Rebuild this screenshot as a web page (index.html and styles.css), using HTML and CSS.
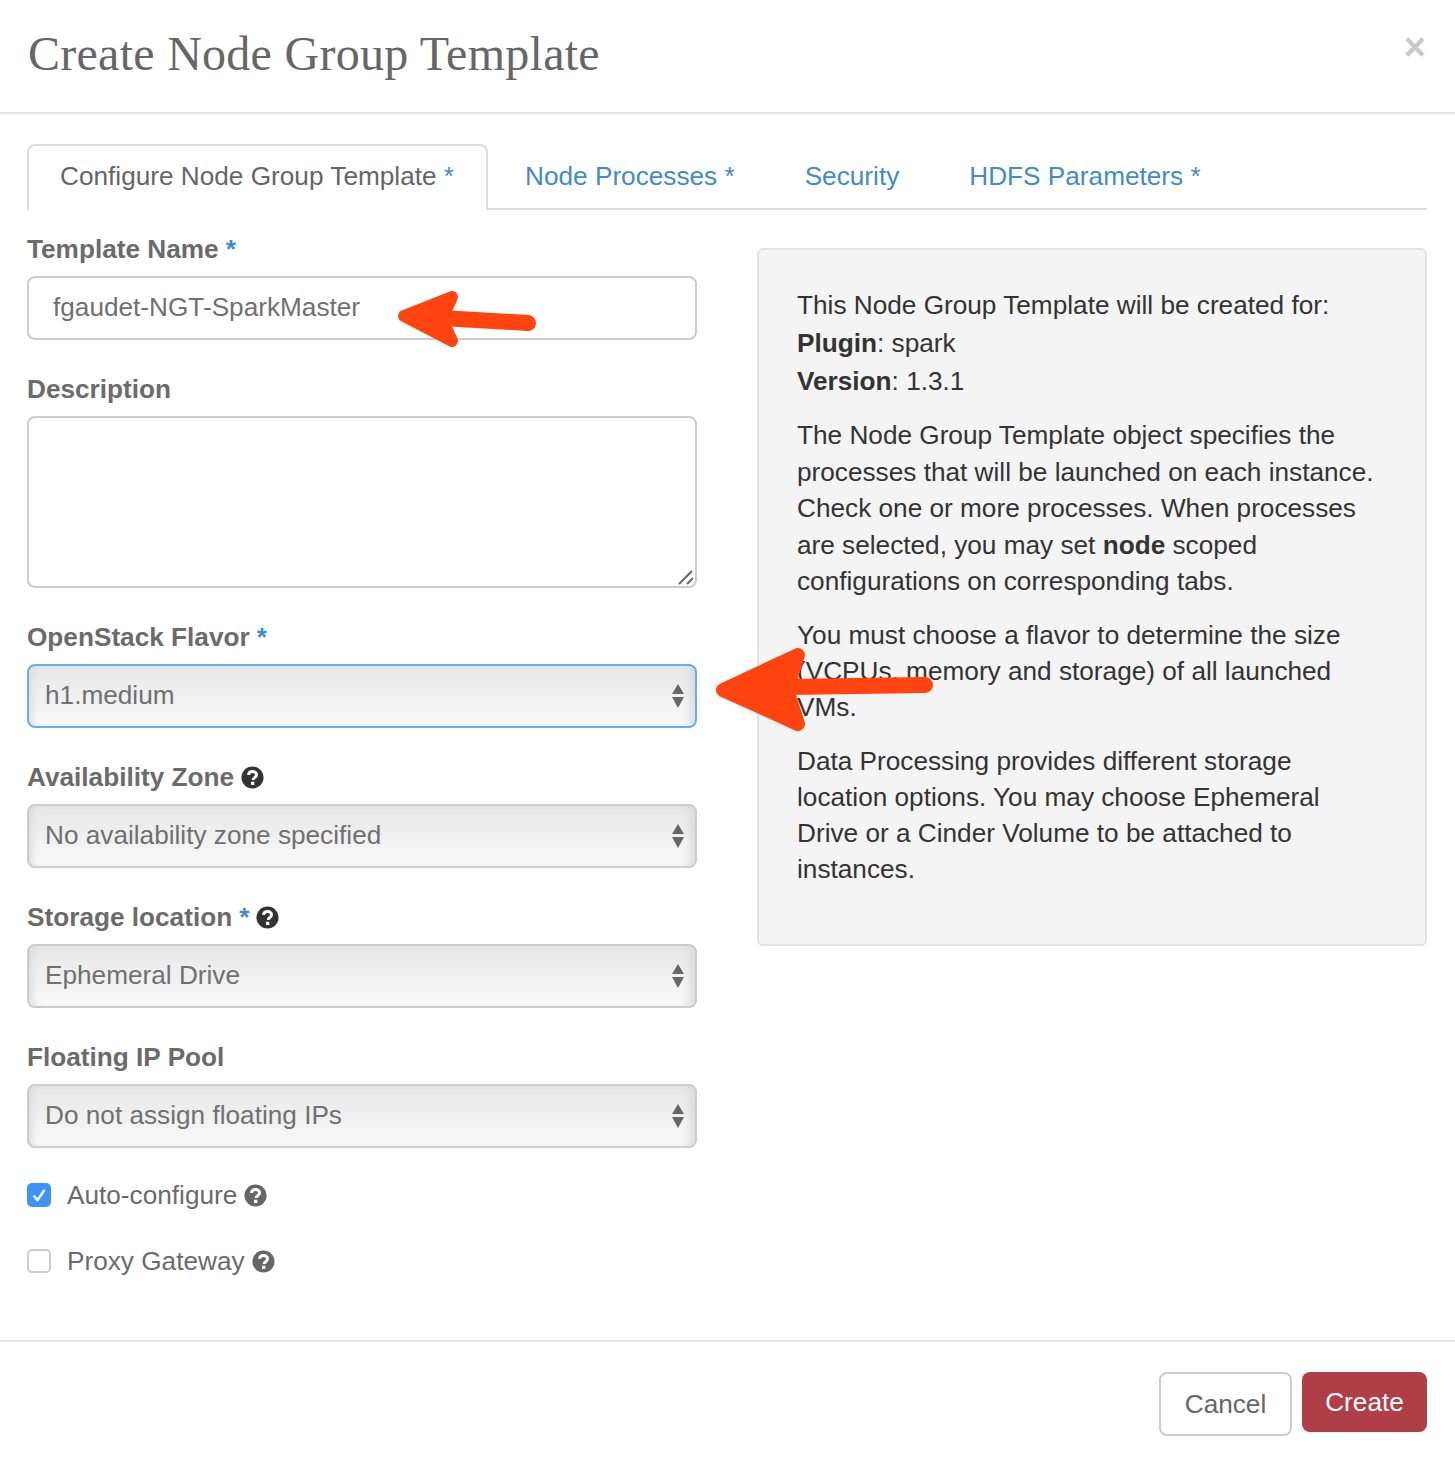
FILE: index.html
```html
<!DOCTYPE html>
<html lang="en">
<head>
  <meta charset="UTF-8">
  <meta name="viewport" content="width=device-width, initial-scale=1.0">
  <title>Create Node Group Template</title>
  <link rel="stylesheet" href="styles.css">
</head>
<body>
  <svg width="0" height="0" class="defs">
    <symbol id="help" viewBox="0 0 24 24">
      <circle cx="12" cy="12" r="11.5" fill="currentColor"/>
      <path d="M7.800 9.300c.2-2.300 1.900-3.600 4.200-3.600 2.400 0 4.200 1.400 4.200 3.500 0 1.700-1 2.400-2 3.100-.9.600-1.500 1-1.500 2.300" fill="none" stroke="#fff" stroke-width="3.100"/>
      <rect x="10.500" y="16.400" width="3.400" height="3.400" fill="#fff"/>
    </symbol>
    <symbol id="updown" viewBox="0 0 12 24">
      <path d="M6 0l6 10H0zM0 13h12L6 24z" fill="#666"/>
    </symbol>
  </svg>

  <div class="modal">
    <div class="modal-header">
      <h1>Create Node Group Template</h1>
      <span class="close">&times;</span>
    </div>

    <div class="modal-body">
      <ul class="tabs">
        <li class="tab active">Configure Node Group Template <span class="req">*</span></li>
        <li class="tab">Node Processes <span class="req">*</span></li>
        <li class="tab">Security</li>
        <li class="tab">HDFS Parameters <span class="req">*</span></li>
      </ul>

      <div class="columns">
        <form class="form">
          <div class="group">
            <label for="name">Template Name <span class="req">*</span></label>
            <input type="text" id="name" value="fgaudet-NGT-SparkMaster">
          </div>
          <div class="group">
            <label for="desc">Description</label>
            <div class="area">
              <textarea id="desc"></textarea>
              <svg class="grip" viewBox="0 0 16 16"><path d="M1 15L14 2M9 15L15 9" fill="none" stroke="#666" stroke-width="2"/></svg>
            </div>
          </div>
          <div class="group">
            <label for="flavor">OpenStack Flavor <span class="req">*</span></label>
            <div class="select focus">
              <select id="flavor"><option>h1.medium</option></select>
              <svg class="updown"><use href="#updown"/></svg>
            </div>
          </div>
          <div class="group">
            <label for="zone">Availability Zone <svg class="help"><use href="#help"/></svg></label>
            <div class="select">
              <select id="zone"><option>No availability zone specified</option></select>
              <svg class="updown"><use href="#updown"/></svg>
            </div>
          </div>
          <div class="group">
            <label for="storage">Storage location <span class="req">*</span> <svg class="help"><use href="#help"/></svg></label>
            <div class="select">
              <select id="storage"><option>Ephemeral Drive</option></select>
              <svg class="updown"><use href="#updown"/></svg>
            </div>
          </div>
          <div class="group last">
            <label for="pool">Floating IP Pool</label>
            <div class="select">
              <select id="pool"><option>Do not assign floating IPs</option></select>
              <svg class="updown"><use href="#updown"/></svg>
            </div>
          </div>
          <div class="check-row">
            <span class="check on">
              <svg viewBox="0 0 24 24"><path d="M6.500 12.500l4 4.500 7-10" fill="none" stroke="#fff" stroke-width="2.400"/></svg>
            </span>
            Auto-configure <svg class="help grey"><use href="#help"/></svg>
          </div>
          <div class="check-row">
            <span class="check"></span>
            Proxy Gateway <svg class="help grey"><use href="#help"/></svg>
          </div>
        </form>

        <div class="info">
          <p class="first">This Node Group Template will be created for:<br>
            <b>Plugin</b>: spark<br>
            <b>Version</b>: 1.3.1</p>
          <p class="wide">The Node Group Template object specifies the processes that will be launched on each instance. Check one or more processes. When processes are selected, you may set <b>node</b> scoped configurations on corresponding tabs.</p>
          <p>You must choose a flavor to determine the size (VCPUs, memory and storage) of all launched VMs.</p>
          <p>Data Processing provides different storage location options. You may choose Ephemeral Drive or a Cinder Volume to be attached to instances.</p>
        </div>
      </div>
    </div>

    <div class="modal-footer">
      <button class="btn cancel">Cancel</button>
      <button class="btn create">Create</button>
    </div>

    <!-- the red arrows drawn on top of the screenshot -->
    <svg class="arrow arrow-name" viewBox="0 0 150 64">
      <path d="M14 31L62 12L52 34L62 56Z" fill="#ff4410" stroke="#ff4410" stroke-width="12" stroke-linejoin="round"/>
      <path d="M52 33L138 38" stroke="#ff4410" stroke-width="16" stroke-linecap="round"/>
    </svg>
    <svg class="arrow arrow-flavor" viewBox="0 0 220 84">
      <path d="M8 42L83 7L72 42L83 76Z" fill="#ff4410" stroke="#ff4410" stroke-width="14" stroke-linejoin="round"/>
      <path d="M72 39L210 37" stroke="#ff4410" stroke-width="16" stroke-linecap="round"/>
    </svg>
  </div>
</body>
</html>
```

FILE: styles.css
```css
* {
  box-sizing: border-box;
}

body {
  margin: 0;
  background: #fff;
  color: #333;
  font-family: "Liberation Sans", Arial, sans-serif;
  font-size: 26.2px;
}

.defs {
  position: absolute;
}

.modal {
  position: relative;
  width: 1455px;
  height: 1464px;
  overflow: hidden;
}

.modal-header {
  height: 114px;
  padding: 27px 28px 0;
  border-bottom: 2px solid #e5e5e5;
  display: flex;
  justify-content: space-between;
}

.modal-header h1 {
  margin: 0;
  font-family: "Liberation Serif", "Times New Roman", serif;
  font-weight: normal;
  font-size: 48px;
  letter-spacing: 0.27px;
  line-height: 54px;
  color: #666;
}

.close {
  font-size: 38px;
  font-weight: bold;
  line-height: 40px;
  color: #c8c8c8;
  margin-right: 1px;
}

.modal-body {
  height: 1226px;
  padding: 30px 28px 0 27px;
}

.tabs {
  display: flex;
  height: 66px;
  margin: 0;
  padding: 0;
  list-style: none;
  border-bottom: 2px solid #ddd;
}

.tab {
  height: 66px;
  padding: 0 31px;
  margin-right: 4px;
  border: 2px solid transparent;
  border-radius: 8px 8px 0 0;
  line-height: 60px;
  color: #428bca;
}

.tab.active {
  padding-right: 32px;
  border-color: #ddd;
  border-bottom: 0;
  background: #fff;
  color: #666;
}

.req {
  color: #428bca;
}

.columns {
  display: flex;
  justify-content: space-between;
  align-items: flex-start;
}

.form {
  width: 670px;
  padding-top: 25px;
}

.group {
  margin-bottom: 35px;
}

.group.last {
  margin-bottom: 33px;
}

.group label {
  display: flex;
  align-items: center;
  gap: 7px;
  height: 28px;
  margin-bottom: 13px;
  font-weight: bold;
  color: #6b6b6b;
}

input[type="text"],
textarea,
select {
  display: block;
  width: 100%;
  font: inherit;
  color: #707070;
  border: 2px solid #ccc;
  border-radius: 8px;
}

input[type="text"] {
  height: 64px;
  padding: 0 24px 2px;
  background: #fff;
}

.area {
  position: relative;
  height: 172px;
}

textarea {
  height: 172px;
  background: #fff;
  resize: none;
}

.grip {
  position: absolute;
  right: 3px;
  bottom: 3px;
  width: 16px;
  height: 16px;
}

.select {
  position: relative;
  height: 64px;
}

select {
  height: 64px;
  padding: 0 16px 2px;
  appearance: none;
  -webkit-appearance: none;
  background: linear-gradient(#e7e7e7, #f9f9f9);
  box-shadow: inset 8px 0 8px -6px #d8d8d8, inset -10px 0 10px -6px #d8d8d8;
}

.select.focus select {
  border-color: #66afe9;
}

.updown {
  position: absolute;
  top: 20px;
  right: 13px;
  width: 12px;
  height: 24px;
  pointer-events: none;
}

.help {
  width: 23px;
  height: 23px;
  color: #333;
  flex: none;
}

.help.grey {
  color: #666;
}

.check-row {
  display: flex;
  align-items: center;
  gap: 7px;
  height: 28px;
  color: #6b6b6b;
}

.check-row + .check-row {
  margin-top: 38px;
}

.check {
  width: 24px;
  height: 24px;
  margin-right: 9px;
  border: 2px solid #ccc;
  border-radius: 5px;
  background: #fff;
}

.check svg {
  display: block;
  width: 24px;
  height: 24px;
  margin: -2px;
}

.check.on {
  border-color: #3b94f6;
  background: #3b94f6;
}

.info {
  width: 670px;
  height: 698px;
  margin-top: 38px;
  padding: 36px 38px 0;
  background: #f4f4f4;
  border: 2px solid #e3e3e3;
  border-radius: 6px;
  line-height: 36px;
}

.info p {
  margin: 0 0 18px;
}

.info .first {
  line-height: 38px;
  margin-bottom: 17px;
}

.info .wide {
  line-height: 36.5px;
  margin-bottom: 17px;
}

.modal-footer {
  height: 124px;
  padding: 30px 28px 0 0;
  border-top: 2px solid #e5e5e5;
  display: flex;
  justify-content: flex-end;
  align-items: flex-start;
  gap: 10px;
}

.btn {
  font: inherit;
  border-radius: 8px;
  cursor: pointer;
}

.cancel {
  width: 133px;
  height: 64px;
  background: #fff;
  border: 2px solid #ccc;
  color: #666;
}

.create {
  width: 125px;
  height: 60px;
  background: #b03e47;
  border: 0;
  color: #fff;
}

.arrow {
  position: absolute;
}

.arrow-name {
  left: 390px;
  top: 285px;
  width: 150px;
  height: 64px;
}

.arrow-flavor {
  left: 715px;
  top: 648px;
  width: 220px;
  height: 84px;
}
```
